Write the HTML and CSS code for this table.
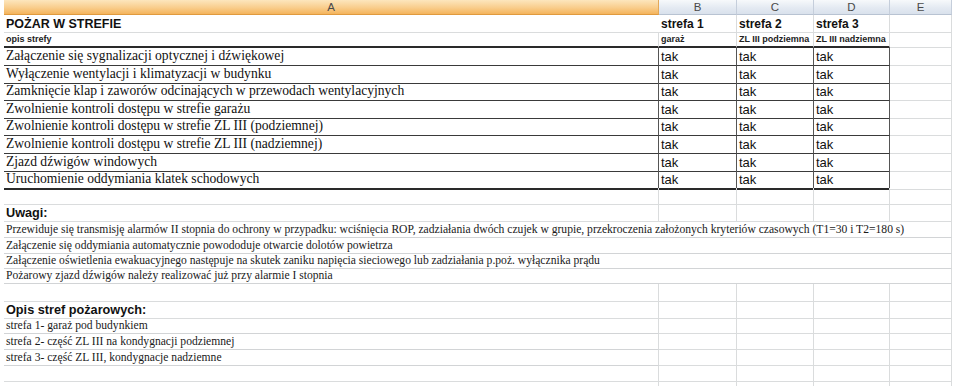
FILE: index.html
```html
<!DOCTYPE html>
<html lang="pl">
<head>
<meta charset="utf-8">
<title>Pożar w strefie</title>
<link rel="stylesheet" href="styles.css">
</head>
<body>
<div class="sheet">
  <div class="row hdr">
    <div class="h ha">A</div>
    <div class="h">B</div>
    <div class="h">C</div>
    <div class="h">D</div>
    <div class="h">E</div>
  </div>
  <div class="row r18">
    <div class="c title">POŻAR W STREFIE</div>
    <div class="c zone">strefa 1</div>
    <div class="c zone">strefa 2</div>
    <div class="c zone">strefa 3</div>
    <div class="c"></div>
  </div>
  <div class="row r15">
    <div class="c small tb">opis strefy</div>
    <div class="c small tb">garaż</div>
    <div class="c small tb">ZL III podziemna</div>
    <div class="c small tb">ZL III nadziemna</div>
    <div class="c"></div>
  </div>
  <div class="row r18 data">
    <div class="c d serif">Załączenie się sygnalizacji optycznej i dźwiękowej</div>
    <div class="c d tak">tak</div><div class="c d tak">tak</div><div class="c d tak">tak</div><div class="c"></div>
  </div>
  <div class="row r17 data">
    <div class="c d serif">Wyłączenie wentylacji i klimatyzacji w budynku</div>
    <div class="c d tak">tak</div><div class="c d tak">tak</div><div class="c d tak">tak</div><div class="c"></div>
  </div>
  <div class="row r18 data">
    <div class="c d serif">Zamknięcie klap i zaworów odcinających w przewodach wentylacyjnych</div>
    <div class="c d tak">tak</div><div class="c d tak">tak</div><div class="c d tak">tak</div><div class="c"></div>
  </div>
  <div class="row r17 data">
    <div class="c d serif">Zwolnienie kontroli dostępu w strefie garażu</div>
    <div class="c d tak">tak</div><div class="c d tak">tak</div><div class="c d tak">tak</div><div class="c"></div>
  </div>
  <div class="row r18 data">
    <div class="c d serif">Zwolnienie kontroli dostępu w strefie ZL III (podziemnej)</div>
    <div class="c d tak">tak</div><div class="c d tak">tak</div><div class="c d tak">tak</div><div class="c"></div>
  </div>
  <div class="row r18 data">
    <div class="c d serif">Zwolnienie kontroli dostępu w strefie ZL III (nadziemnej)</div>
    <div class="c d tak">tak</div><div class="c d tak">tak</div><div class="c d tak">tak</div><div class="c"></div>
  </div>
  <div class="row r17 data">
    <div class="c d serif">Zjazd dźwigów windowych</div>
    <div class="c d tak">tak</div><div class="c d tak">tak</div><div class="c d tak">tak</div><div class="c"></div>
  </div>
  <div class="row r17 data last">
    <div class="c d serif">Uruchomienie oddymiania klatek schodowych</div>
    <div class="c d tak">tak</div><div class="c d tak">tak</div><div class="c d tak">tak</div><div class="c"></div>
  </div>
  <div class="row r17">
    <div class="c"></div><div class="c"></div><div class="c"></div><div class="c"></div><div class="c"></div>
  </div>
  <div class="row r17">
    <div class="c head">Uwagi:</div><div class="c"></div><div class="c"></div><div class="c"></div><div class="c"></div>
  </div>
  <div class="row r16">
    <div class="c span note">Przewiduje się transmisję alarmów II stopnia do ochrony w przypadku: wciśnięcia ROP, zadziałania dwóch czujek w grupie, przekroczenia założonych kryteriów czasowych (T1=30 i T2=180 s)</div>
  </div>
  <div class="row r16">
    <div class="c span note">Załączenie się oddymiania automatycznie powododuje otwarcie dolotów powietrza</div>
  </div>
  <div class="row r15">
    <div class="c span note">Załączenie oświetlenia ewakuacyjnego następuje na skutek zaniku napięcia sieciowego lub zadziałania p.poż. wyłącznika prądu</div>
  </div>
  <div class="row r15">
    <div class="c span note">Pożarowy zjazd dźwigów należy realizować już przy alarmie I stopnia</div>
  </div>
  <div class="row r18">
    <div class="c"></div><div class="c"></div><div class="c"></div><div class="c"></div><div class="c"></div>
  </div>
  <div class="row r17">
    <div class="c head">Opis stref pożarowych:</div><div class="c"></div><div class="c"></div><div class="c"></div><div class="c"></div>
  </div>
  <div class="row r15">
    <div class="c note">strefa 1- garaż pod budynkiem</div><div class="c"></div><div class="c"></div><div class="c"></div><div class="c"></div>
  </div>
  <div class="row r16">
    <div class="c note">strefa 2- część ZL III na kondygnacji podziemnej</div><div class="c"></div><div class="c"></div><div class="c"></div><div class="c"></div>
  </div>
  <div class="row r16">
    <div class="c note">strefa 3- część ZL III, kondygnacje nadziemne</div><div class="c"></div><div class="c"></div><div class="c"></div><div class="c"></div>
  </div>
  <div class="row r16">
    <div class="c"></div><div class="c"></div><div class="c"></div><div class="c"></div><div class="c"></div>
  </div>
  <div class="row r16">
    <div class="c"></div><div class="c"></div><div class="c"></div><div class="c"></div><div class="c"></div>
  </div>
</div>
</body>
</html>
```
FILE: styles.css
```css
html, body {
  margin: 0;
  padding: 0;
  background: #ffffff;
}
body {
  font-family: "Liberation Sans", Arial, sans-serif;
  color: #111;
  overflow: hidden;
}
.sheet {
  padding-left: 4px;
}
.row {
  display: grid;
  grid-template-columns: 655px 78px 77px 76px 62px;
}
.r15 { height: 15px; }
.r16 { height: 16px; }
.r17 { height: 17px; }
.r18 { height: 18px; }

.hdr { height: 15px; }
.h {
  box-sizing: border-box;
  display: flex;
  align-items: center;
  justify-content: center;
  font-size: 11.5px;
  color: #4a4a4a;
  background: linear-gradient(#f7f9fb, #e4eaf2 55%, #d9e1ec);
  border-right: 1px solid #c5cedb;
  border-bottom: 1px solid #b8c3d2;
}
.h.ha {
  background: linear-gradient(#fde6bd, #f9cd8c 55%, #f4b45c);
  border-right: 1px solid #e3a858;
  border-bottom: 1px solid #e09a3e;
}

.c {
  box-sizing: border-box;
  border-right: 1px solid #dadcdd;
  border-bottom: 1px solid #dadcdd;
  display: flex;
  align-items: flex-end;
  padding: 0 0 1px 2px;
  white-space: nowrap;
  overflow: visible;
  min-width: 0;
}
.c.span {
  grid-column: 1 / -1;
}
.title {
  font-weight: bold;
  font-size: 12.5px;
  color: #111;
  border-right: 0;
}
.zone {
  font-weight: bold;
  font-size: 12px;
  color: #111;
}
.small {
  font-weight: bold;
  font-size: 9px;
  color: #222;
  padding-bottom: 2px;
}
.tb {
  border-bottom: 2px solid #2a2a2a;
}
.d {
  border-bottom: 1px solid #3a3a3a;
  border-right: 1px solid #555;
}
.last .d {
  border-bottom: 2px solid #2a2a2a;
}
.serif {
  font-family: "Liberation Serif", "Times New Roman", serif;
  font-size: 13.6px;
  color: #111;
}
.tak {
  font-size: 13px;
  color: #111;
}
.head {
  font-weight: bold;
  font-size: 12.7px;
  color: #111;
}
.note {
  font-family: "Liberation Serif", "Times New Roman", serif;
  font-size: 11.6px;
  color: #1a1a1a;
  border-bottom-color: #d2d4d6;
}
.c.note:not(.span) {
  border-right: 1px solid #dadcdd;
}
```
